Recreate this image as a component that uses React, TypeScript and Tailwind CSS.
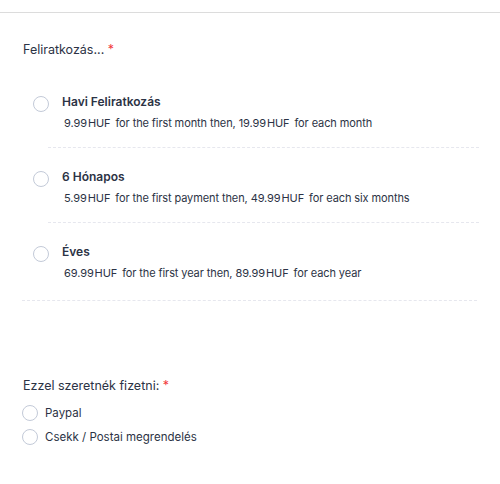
const plans = [
  {
    title: 'Havi Feliratkozás',
    first: '9.99',
    firstText: 'for the first month then,',
    next: '19.99',
    nextText: 'for each month',
  },
  {
    title: '6 Hónapos',
    first: '5.99',
    firstText: 'for the first payment then,',
    next: '49.99',
    nextText: 'for each six months',
  },
  {
    title: 'Éves',
    first: '69.99',
    firstText: 'for the first year then,',
    next: '89.99',
    nextText: 'for each year',
  },
]

function Radio() {
  return <span className="block w-4 h-4 rounded-full border border-[#c3cad8] bg-white shrink-0" />
}

export default function App() {
  return (
    <div
      className="w-[500px] h-[484px] bg-white text-[#2c3345] overflow-hidden"
      style={{ fontFamily: 'Inter, "Noto Sans", sans-serif' }}
    >
      <div className="h-[13px] border-b border-[#dcdcdc]" />

      <div className="px-[23px] pt-[28px]">
        <p className="text-[12.5px] leading-[18px]">
          Feliratkozás... <span className="text-[#f23a3c]">*</span>
        </p>

        <div className="mt-[33px]">
          {plans.map((p, i) => (
            <div key={p.title} className="flex flex-col">
              <div className="flex gap-[13px] pl-[10px]">
                <div className="pt-[4px]">
                  <Radio />
                </div>
                <div className="flex flex-col">
                  <span className="text-[12px] leading-[20px] font-semibold">{p.title}</span>
                  <span className="text-[11px] leading-[16px] mt-[3px] pl-[2px] tracking-[-0.1px]">
                    {p.first}<span className="ml-[1px] mr-[2px]">HUF</span> {p.firstText} {p.next}
                    <span className="ml-[1px] mr-[2px]">HUF</span> {p.nextText}
                  </span>
                </div>
              </div>
              <div
                className={`border-b border-dashed border-[#e6e7ee] ${
                  i < plans.length - 1 ? 'ml-[25px] -mr-[2px] mt-[16px] mb-[19px]' : 'ml-[-1px] mt-[19px]'
                }`}
              />
            </div>
          ))}
        </div>

        <p className="mt-[76px] text-[12.5px] leading-[18px]">
          Ezzel szeretnék fizetni: <span className="text-[#f23a3c]">*</span>
        </p>
        <div className="mt-[10px] flex flex-col gap-[8px] -ml-[1px]">
          {['Paypal', 'Csekk / Postai megrendelés'].map((o) => (
            <label key={o} className="flex items-center gap-[7px]">
              <Radio />
              <span className="text-[11.5px] leading-[16px]">{o}</span>
            </label>
          ))}
        </div>
      </div>
    </div>
  )
}
